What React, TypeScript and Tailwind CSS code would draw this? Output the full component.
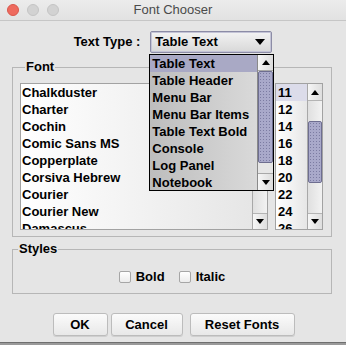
const textTypes = [
	"Table Text",
	"Table Header",
	"Menu Bar",
	"Menu Bar Items",
	"Table Text Bold",
	"Console",
	"Log Panel",
	"Notebook",
];

const fonts = [
	"Chalkduster",
	"Charter",
	"Cochin",
	"Comic Sans MS",
	"Copperplate",
	"Corsiva Hebrew",
	"Courier",
	"Courier New",
	"Damascus",
];

const sizes = ["11", "12", "14", "16", "18", "20", "22", "24", "26"];

function UpArrow() {
	return (
		<div className="w-0 h-0 border-x-[4px] border-x-transparent border-b-[5px] border-b-black" />
	);
}

function DownArrow() {
	return (
		<div className="w-0 h-0 border-x-[4px] border-x-transparent border-t-[5px] border-t-black" />
	);
}

function Thumb({ className }: { className: string }) {
	return (
		<div
			className={`border border-[#6e6e90] rounded-[2px] bg-[#a9a9ca] bg-[radial-gradient(#7c7ca2_0.7px,transparent_0.8px)] bg-[length:3px_3px] ${className}`}
		/>
	);
}

function Legend({ children }: { children: string }) {
	return (
		<legend className="ml-[5px] px-[1px] font-bold leading-[16px] text-[13px]">
			{children}
		</legend>
	);
}

function Checkbox({ label }: { label: string }) {
	return (
		<label className="flex items-center gap-[5px] font-bold">
			<span className="w-[12px] h-[12px] border border-[#a6a6a6] rounded-[2px] bg-gradient-to-b from-white to-[#ececec]" />
			{label}
		</label>
	);
}

function DialogButton({ label, className }: { label: string; className: string }) {
	return (
		<button
			type="button"
			className={`h-[23px] font-bold border border-[#bcbcbc] rounded-[3px] bg-gradient-to-b from-[#fbfbfb] to-[#e8e8e8] shadow-[0_1px_0_#cfcfcf] ${className}`}
		>
			{label}
		</button>
	);
}

export default function App() {
	return (
		<div className="w-[346px] h-[345px] flex flex-col overflow-hidden bg-[#e5e5e5] text-[13px] text-black font-['Liberation_Sans',Arial,sans-serif]">
			<div className="h-[21px] shrink-0 grid grid-cols-[1fr_auto_1fr] items-center border-b border-[#c6c6c6] bg-gradient-to-b from-[#ececec] to-[#e2e2e2]">
				<div className="flex items-center gap-[8px] pl-[7px]">
					<span className="w-[12px] h-[12px] rounded-full bg-[#ee6a5e] border border-[#d9574c]" />
					<span className="w-[12px] h-[12px] rounded-full bg-[#d2d2d2] border border-[#c4c4c4]" />
					<span className="w-[12px] h-[12px] rounded-full bg-[#d2d2d2] border border-[#c4c4c4]" />
				</div>
				<span className="text-[#4a4a4a] text-[13px]">Font Chooser</span>
				<div />
			</div>

			<div className="mt-[10px] h-[22px] flex items-center justify-center gap-[10px]">
				<span className="font-bold">Text Type :</span>
				<div className="relative w-[122px] h-[22px]">
					<div className="h-full flex items-center justify-between pl-[4px] pr-[6px] border border-[#8c8ca6] rounded-[2px] shadow-[inset_0_0_0_1px_#c4c4d6] bg-gradient-to-b from-[#f3f3f3] to-[#d8d8d8]">
						<span className="font-bold">Table Text</span>
						<div className="w-0 h-0 border-x-[5px] border-x-transparent border-t-[6px] border-t-black" />
					</div>
					{/* open popup list, lies over the font panel */}
					<div className="absolute left-[-1px] top-[23px] z-10 w-[125px] h-[137px] flex border border-black bg-gradient-to-r from-[#bdbdbd] to-[#dedede]">
						<div className="flex-1 flex flex-col">
							{textTypes.map((t, i) => (
								<div
									key={t}
									className={`h-[17px] leading-[17px] pl-[2px] font-bold whitespace-nowrap ${
										i === 0 ? "bg-[#a9a9c5]" : ""
									}`}
								>
									{t}
								</div>
							))}
						</div>
						<div className="w-[16px] flex flex-col border-l border-[#8a8a8a] bg-[#e6e6e6]">
							<div className="h-[16px] shrink-0 flex items-center justify-center border-b border-[#a8a8a8] bg-gradient-to-r from-[#f6f6f6] to-[#dcdcdc]">
								<UpArrow />
							</div>
							<Thumb className="h-[92px] shrink-0" />
							<div className="flex-1 border-b border-[#a8a8a8]" />
							<div className="h-[16px] shrink-0 flex items-center justify-center bg-gradient-to-r from-[#f6f6f6] to-[#dcdcdc]">
								<DownArrow />
							</div>
						</div>
					</div>
				</div>
			</div>

			<fieldset className="mt-[6px] ml-[12px] w-[320px] border border-[#b6b6b6] pt-[8px] pl-[7px] pb-[6px] flex">
				<Legend>Font</Legend>
				<div className="flex gap-[7px]">
					<div className="w-[248px] h-[147px] flex border border-[#a2a2a2] overflow-hidden">
						<div className="flex-1 overflow-hidden bg-gradient-to-r from-white to-[#e6e6e6]">
							{fonts.map((f) => (
								<div key={f} className="h-[17px] leading-[17px] pl-[1px] font-bold whitespace-nowrap">
									{f}
								</div>
							))}
						</div>
						<div className="w-[15px] flex flex-col border-l border-[#a8a8a8] bg-gradient-to-r from-[#e0e0e0] to-[#f2f2f2]">
							<div className="h-[16px] shrink-0 flex items-center justify-center border-b border-[#b4b4b4]">
								<UpArrow />
							</div>
							<Thumb className="h-[40px] shrink-0" />
							<div className="flex-1" />
							<div className="h-[16px] shrink-0 flex items-center justify-center border-t border-[#b4b4b4] bg-gradient-to-r from-[#f6f6f6] to-[#dedede]">
								<DownArrow />
							</div>
						</div>
					</div>
					<div className="w-[48px] h-[147px] flex border border-[#a2a2a2] overflow-hidden">
						<div className="flex-1 overflow-hidden bg-gradient-to-r from-white to-[#e6e6e6]">
							{sizes.map((s, i) => (
								<div
									key={s}
									className={`h-[17px] leading-[17px] pl-[2px] font-bold ${
										i === 0 ? "bg-[#dcdcea]" : ""
									}`}
								>
									{s}
								</div>
							))}
						</div>
						<div className="w-[15px] flex flex-col border-l border-[#a8a8a8] bg-gradient-to-r from-[#e0e0e0] to-[#f2f2f2]">
							<div className="h-[17px] shrink-0 flex items-center justify-center border-b border-[#b4b4b4] bg-gradient-to-r from-[#f6f6f6] to-[#dedede]">
								<UpArrow />
							</div>
							<div className="h-[20px] shrink-0" />
							<Thumb className="h-[62px] shrink-0" />
							<div className="flex-1" />
							<div className="h-[16px] shrink-0 flex items-center justify-center border-t border-[#b4b4b4] bg-gradient-to-r from-[#f6f6f6] to-[#dedede]">
								<DownArrow />
							</div>
						</div>
					</div>
				</div>
			</fieldset>

			<fieldset className="mt-[4px] ml-[12px] w-[320px] border border-[#b6b6b6] pt-[10px] pb-[6px]">
				<Legend>Styles</Legend>
				<div className="h-[20px] flex items-center justify-center gap-[14px]">
					<Checkbox label="Bold" />
					<Checkbox label="Italic" />
				</div>
			</fieldset>

			<div className="mt-[19px] flex justify-center pl-[1px]">
				<DialogButton label="OK" className="w-[55px]" />
				<DialogButton label="Cancel" className="ml-[3px] w-[72px]" />
				<DialogButton label="Reset Fonts" className="ml-[7px] w-[105px]" />
			</div>

			<div className="mt-auto h-[3px] shrink-0 border-t border-[#6f6f6f] bg-[#9a9a9a]" />
		</div>
	);
}
